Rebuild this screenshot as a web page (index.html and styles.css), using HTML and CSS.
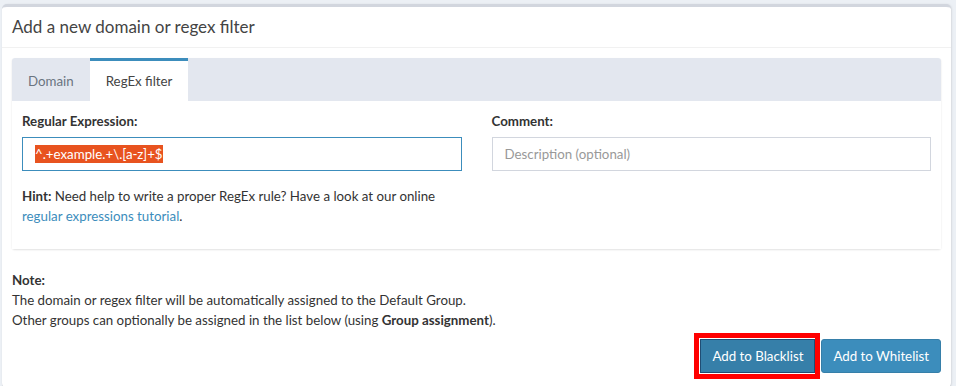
FILE: index.html
```html
<!DOCTYPE html>
<html>
<head>
<meta charset="utf-8">
<link rel="stylesheet" href="styles.css">
</head>
<body>
<div class="box">
  <div class="box-header">
    <h3 class="box-title">Add a new domain or regex filter</h3>
  </div>
  <div class="box-body">
    <div class="tabs">
      <ul class="nav-tabs">
        <li class="tab">Domain</li>
        <li class="tab active">RegEx filter</li>
      </ul>
      <div class="tab-content">
        <div class="row">
          <div class="col">
            <label class="lbl">Regular Expression:</label>
            <div class="input focus"><span class="sel">^.+example.+\.[a-z]+$</span></div>
          </div>
          <div class="col">
            <label class="lbl">Comment:</label>
            <div class="input"><span class="ph">Description (optional)</span></div>
          </div>
        </div>
        <p class="hint"><strong>Hint:</strong> Need help to write a proper RegEx rule? Have a look at our online<br><a class="link" href="#">regular expressions tutorial</a>.</p>
      </div>
    </div>
    <div class="note">
      <strong>Note:</strong><br>
      The domain or regex filter will be automatically assigned to the Default Group.<br>
      Other groups can optionally be assigned in the list below (using <strong>Group assignment</strong>).
    </div>
    <div class="actions">
      <span class="mark"><button class="btn btn-dark">Add to Blacklist</button></span>
      <button class="btn">Add to Whitelist</button>
    </div>
  </div>
</div>
</body>
</html>
```
FILE: styles.css
```css
* { box-sizing: border-box; }
html, body { margin: 0; }
body {
  background: #ecf0f5;
  font-family: "Lato", "Liberation Sans", sans-serif;
  font-size: 13.3px;
  line-height: 20px;
  color: #333;
  padding: 4px 5px 0 2px;
}
.box {
  background: #fff;
  border-top: 3px solid #d2d6de;
  border-radius: 5px;
  box-shadow: 0 1px 1px rgba(0,0,0,0.12), 1px 0 2px rgba(0,0,0,0.08);
}
.box-header {
  padding: 9px 10px 10px;
  border-bottom: 1px solid #f1f1f1;
}
.box-title {
  margin: 0;
  font-size: 17px;
  font-weight: 400;
  line-height: 21px;
  color: #444;
}
.box-body { padding: 10px 10px 9px; }
.tabs {
  box-shadow: 0 1px 2px rgba(0,0,0,0.12);
  border-radius: 3px;
  margin-bottom: 21px;
}
.nav-tabs {
  list-style: none;
  margin: 0;
  padding: 0;
  display: flex;
  background: #e3e7ef;
  border-radius: 3px 3px 0 0;
}
.tab {
  border-top: 3px solid transparent;
  padding: 10px 16px;
  color: #6a7480;
}
.tab.active {
  border-top-color: #3c8dbc;
  background: #fff;
  color: #444;
}
.tab-content { padding: 10px 10px 23px; background: #fff; }
.row { display: flex; gap: 30px; }
.col { flex: 1; }
.lbl { display: block; font-weight: 700; margin-bottom: 6px; color: #333; }
.input {
  height: 34px;
  border: 1px solid #d2d6de;
  padding: 6px 12px;
  line-height: 20px;
}
.input.focus { border-color: #3c8dbc; }
.sel { background: #e8531f; color: #fff; padding: 1px 0; }
.ph { color: #999; }
.hint { margin: 15px 0 0; }
.link { color: #3c8dbc; text-decoration: none; }
.note { margin-top: 0; }
.actions {
  display: flex;
  justify-content: flex-end;
  align-items: center;
  gap: 1px;
  margin-top: 3px;
}
.mark {
  display: inline-flex;
  border: 5px solid #f00;
  padding: 1px 0 1px 1px;
}
.btn {
  font: inherit;
  line-height: 20px;
  height: 34px;
  padding: 6px 11px;
  border: 1px solid #367fa9;
  background: #3c8dbc;
  color: #fff;
  border-radius: 3px;
}
.btn-dark { background: #367fa9; border-color: #204d74; border-radius: 0; }
```
